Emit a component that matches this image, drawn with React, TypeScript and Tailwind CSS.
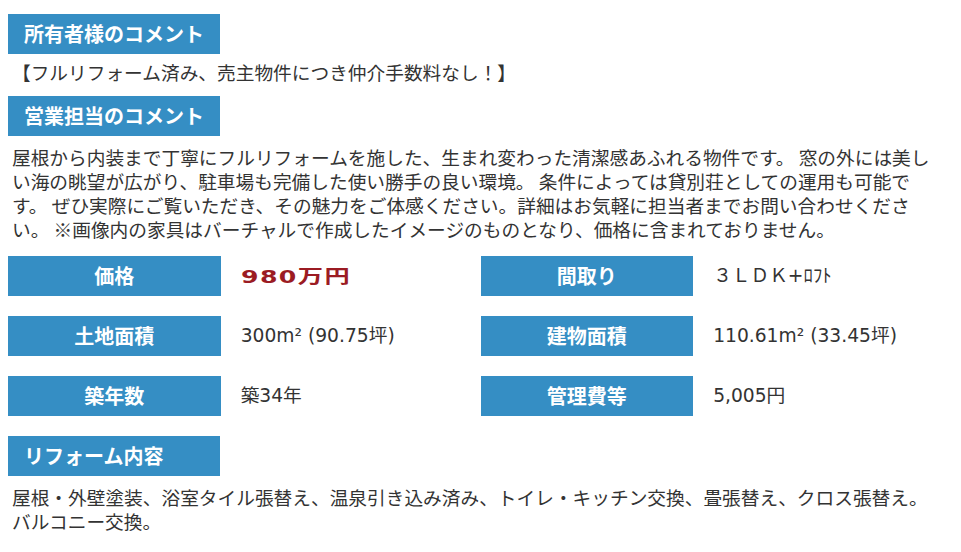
const specs = [
    { label: "価格", value: "980万円", price: true },
    { label: "間取り", value: "３ＬＤＫ+ﾛﾌﾄ" },
    { label: "土地面積", value: "300m² (90.75坪)" },
    { label: "建物面積", value: "110.61m² (33.45坪)" },
    { label: "築年数", value: "築34年" },
    { label: "管理費等", value: "5,005円" },
];

function Heading({ children, className = "" }: { children: React.ReactNode; className?: string }) {
    return (
        <h3 className={`w-[212px] h-10 bg-[#358ec4] pl-4 flex items-center text-white font-bold text-[20px] ${className}`}>
            {children}
        </h3>
    );
}

export default function App() {
    return (
        <div className="min-h-screen bg-white px-2 pt-[14px] text-[#333] font-['Noto_Sans_CJK_JP',sans-serif]">
            <Heading>所有者様のコメント</Heading>
            <p className="mt-[6px] pl-1 pr-[13px] text-[18.7px] leading-6">
                【フルリフォーム済み、売主物件につき仲介手数料なし！】
            </p>

            <Heading className="mt-3">営業担当のコメント</Heading>
            <p className="mt-[9px] pl-1 pr-[13px] text-[18.7px] leading-6">
                屋根から内装まで丁寧にフルリフォームを施した、生まれ変わった清潔感あふれる物件です。 窓の外には美しい海の眺望が広がり、駐車場も完備した使い勝手の良い環境。 条件によっては貸別荘としての運用も可能です。 ぜひ実際にご覧いただき、その魅力をご体感ください。詳細はお気軽に担当者までお問い合わせください。 ※画像内の家具はバーチャルで作成したイメージのものとなり、価格に含まれておりません。
            </p>

            {/* property table: label 45% + value, two per row */}
            <div className="mt-[15px] grid grid-cols-2 gap-y-5">
                {specs.map((s, i) => (
                    <div key={i} className="flex h-10">
                        <div className="w-[45%] shrink-0 bg-[#358ec4] flex items-center justify-center text-white font-bold text-[20px]">
                            {s.label}
                        </div>
                        <div className="flex items-center pl-5">
                            {s.price ? (
                                <span className="inline-block origin-left scale-x-[1.4] font-['DejaVu_Sans','Noto_Sans_CJK_JP',sans-serif] font-bold text-[18px] tracking-[1px] text-[#9b1b23]">
                                    {s.value}
                                </span>
                            ) : (
                                <span className="font-['DejaVu_Sans','Noto_Sans_CJK_JP',sans-serif] text-[18.7px]">
                                    {s.value}
                                </span>
                            )}
                        </div>
                    </div>
                ))}
            </div>

            <Heading className="mt-5">リフォーム内容</Heading>
            <p className="mt-[9px] pl-1 pr-[13px] text-[18.7px] leading-6">
                屋根・外壁塗装、浴室タイル張替え、温泉引き込み済み、トイレ・キッチン交換、畳張替え、クロス張替え。バルコニー交換。
            </p>
        </div>
    );
}
